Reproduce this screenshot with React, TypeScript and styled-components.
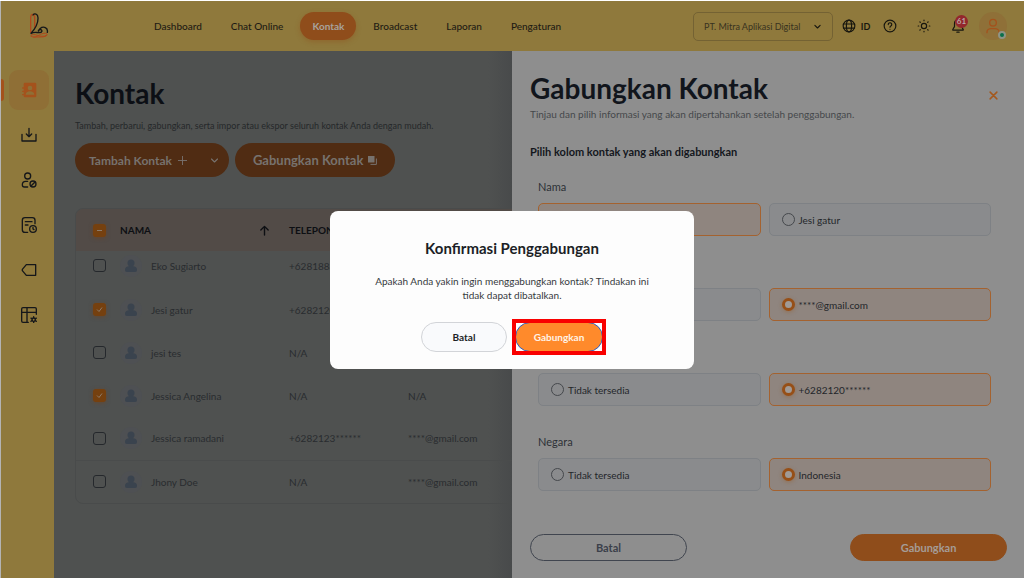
import React from 'react';
import styled, { createGlobalStyle } from 'styled-components';

const GlobalStyle = createGlobalStyle`
  *, *::before, *::after { box-sizing: border-box; }
  body {
    margin: 0;
    background: #fff;
    font-family: Lato, "Liberation Sans", sans-serif;
    font-size: 10px;
    color: #14181f;
  }
  h1, h2, p, fieldset, ul { margin: 0; padding: 0; border: 0; list-style: none; }
  button, input, select { font: inherit; color: inherit; margin: 0; }
  button { cursor: pointer; padding: 0; border: 0; background: none; }
  a { color: inherit; text-decoration: none; }
`;

const Page = styled.div`
  min-height: 100vh;
  display: flex;
  flex-direction: column;
  border-top: 1px solid #fff;
`;

const Header = styled.header`
  display: flex;
  align-items: center;
  height: 50px;
  padding: 0 17px 0 28px;
  border-left: 1px solid #b4b4b4;
  background: #8f793c;
`;

const Logo = styled.a`
  display: flex;
  width: 113px;
`;

const Nav = styled.nav`
  display: flex;
  gap: 5px;
  flex: 1;
`;

const NavLink = styled.a<{ $active?: boolean }>`
  display: flex;
  align-items: center;
  height: 28px;
  padding: 0 12px;
  border-radius: 14px;
  font-size: 10px;
  white-space: nowrap;
  color: ${p => (p.$active ? '#a8a29c' : '#1e1b14')};
  font-weight: ${p => (p.$active ? 700 : 500)};
  background: ${p => (p.$active ? '#8f4d1b' : 'transparent')};
  box-shadow: ${p => (p.$active ? '0 2px 5px rgba(143, 77, 27, 0.4)' : 'none')};
`;

const Tools = styled.div`
  display: flex;
  align-items: center;
  color: #17160f;
`;

const CompanyField = styled.div`
  display: grid;
  align-items: center;
  width: 140px;
  margin-right: 6px;
  > * { grid-area: 1 / 1; }
  > svg { justify-self: end; margin-right: 11px; pointer-events: none; }
`;

const CompanySelect = styled.select`
  appearance: none;
  width: 100%;
  height: 29px;
  padding: 0 24px 0 10px;
  border: 1px solid #746233;
  border-radius: 5px;
  background: transparent;
  color: #38321f;
  font-size: 9px;
`;

const ToolButton = styled.button`
  display: flex;
  align-items: center;
  justify-content: center;
  gap: 5px;
  min-width: 34px;
  height: 30px;
  font-size: 9px;
  font-weight: 700;
`;

const BellWrap = styled.span`
  position: relative;
  display: flex;
`;

const Badge = styled.span`
  position: absolute;
  top: -4px;
  left: 4px;
  min-width: 13px;
  height: 13px;
  border-radius: 7px;
  background: #93272c;
  color: #b9a5a5;
  font-size: 8px;
  line-height: 13px;
  text-align: center;
`;

const Profile = styled.button`
  position: relative;
  display: flex;
  align-items: center;
  justify-content: center;
  width: 28px;
  height: 28px;
  margin-left: 4px;
  border-radius: 50%;
  background: #8f7038;
  color: #a4521c;
`;

const Presence = styled.span`
  position: absolute;
  right: 1px;
  bottom: 1px;
  width: 8px;
  height: 8px;
  border-radius: 50%;
  border: 2px solid #8e9486;
  background: #08704a;
`;

const Body = styled.div`
  display: flex;
  flex: 1;
`;

const Sidebar = styled.nav`
  display: flex;
  flex-direction: column;
  gap: 5px;
  flex: 0 0 54px;
  padding: 19px 5px 0 0;
  border-left: 1px solid #b4b4b4;
  background: #8f793c;
`;

const SideLink = styled.a<{ $active?: boolean }>`
  display: flex;
  align-items: center;
  justify-content: space-between;
  height: 40px;
  color: ${p => (p.$active ? '#a4521c' : '#15171a')};
  &::before {
    content: '';
    width: 3px;
    height: 22px;
    border-radius: 0 3px 3px 0;
    background: ${p => (p.$active ? '#a4521c' : 'transparent')};
  }
`;

const SideIcon = styled.span<{ $active?: boolean }>`
  display: flex;
  align-items: center;
  justify-content: center;
  width: 40px;
  height: 40px;
  border-radius: 9px;
  background: ${p => (p.$active ? '#8f6f36' : 'transparent')};
`;

const Main = styled.main`
  flex: 1;
  min-width: 0;
  overflow: hidden;
  padding: 22px 0 0 21px;
  background: linear-gradient(to left, #484a4b, #4f5150 24px);
`;

const Title = styled.h1`
  font-size: 28px;
  line-height: 40px;
  font-weight: 700;
  color: #0c0f15;
`;

const Lead = styled.p`
  margin-top: 6px;
  font-size: 9px;
  line-height: 14px;
  white-space: nowrap;
  color: #25282a;
`;

const Actions = styled.div`
  display: flex;
  gap: 6px;
  margin: 10px 0 31px;
`;

const ActionButton = styled.button<{ $large?: boolean }>`
  display: flex;
  align-items: center;
  justify-content: center;
  gap: 5px;
  height: 34px;
  padding: ${p => (p.$large ? '0 18px' : '0 10px 0 14px')};
  border-radius: 17px;
  background: #502c13;
  color: #77726e;
  font-size: ${p => (p.$large ? 13 : 12)}px;
  font-weight: 700;
  white-space: nowrap;
  > svg:last-child { margin-left: ${p => (p.$large ? 0 : 17)}px; }
`;

const TableCard = styled.div`
  width: 600px;
  overflow: hidden;
  border: 1px solid #494b4b;
  border-radius: 8px;
`;

const Table = styled.table`
  width: 100%;
  table-layout: fixed;
  border-collapse: collapse;
  font-size: 10px;
  color: #292c2f;

  th, td { padding: 0; text-align: left; white-space: nowrap; }
  th { height: 42px; background: #524b47; color: #0d0f13; }
  td { height: 43px; }
  tbody tr:first-child td { height: 37px; padding-bottom: 8px; }
  tbody tr:last-child td { border-top: 1px solid #4a4c4c; }
  th:first-child, td:first-child { padding-left: 17px; }
`;

const Sortable = styled.span`
  display: flex;
  align-items: center;
  justify-content: space-between;
  padding-right: 19px;
`;

const Person = styled.span`
  display: flex;
  align-items: center;
  gap: 9px;
`;

const PersonAvatar = styled.span`
  display: flex;
  align-items: center;
  justify-content: center;
  width: 22px;
  height: 22px;
  border-radius: 50%;
  background: #4e5053;
`;

const CheckMark = styled.span`
  display: grid;
  width: 13px;
  height: 13px;
  > * { grid-area: 1 / 1; }
  > svg { pointer-events: none; }
`;

const CheckInput = styled.input<{ $filled?: boolean }>`
  appearance: none;
  width: 13px;
  height: 13px;
  border: ${p => (p.$filled ? '0' : '1px solid #25282c')};
  border-radius: 3px;
  background: ${p => (p.$filled ? '#75400f' : 'transparent')};
  box-shadow: ${p => (p.$filled ? '0 1px 4px rgba(120, 62, 20, 0.5)' : 'none')};
`;

const Drawer = styled.aside`
  display: flex;
  flex-direction: column;
  flex: 0 0 50%;
  padding: 18px 17px 17px 18px;
  background: #8e8e8e;
  color: #1c2026;
`;

const DrawerHead = styled.div`
  display: flex;
  align-items: center;
  justify-content: space-between;
  height: 52px;
  margin-bottom: 24px;
`;

const DrawerTitle = styled.h2`
  font-size: 28px;
  line-height: 38px;
  font-weight: 700;
  color: #11151c;
`;

const DrawerLead = styled.p`
  font-size: 10px;
  line-height: 14px;
  color: #45484b;
`;

const CloseButton = styled.button`
  display: flex;
  padding: 9px;
  color: #a4581d;
`;

const SectionTitle = styled.p`
  font-size: 11px;
  line-height: 14px;
  font-weight: 700;
  color: #14171d;
`;

const FieldList = styled.div`
  display: flex;
  flex-direction: column;
  gap: 29px;
  flex: 1;
  padding: 21px 16px 20px 8px;
`;

const Field = styled.fieldset`
  min-width: 0;
`;

const FieldName = styled.legend`
  padding: 0;
  margin-bottom: 9px;
  font-size: 11px;
  line-height: 14px;
  color: #2d3136;
`;

const Options = styled.div`
  display: grid;
  grid-template-columns: 1fr 1fr;
  gap: 8px;
`;

const Option = styled.label<{ $selected: boolean }>`
  display: flex;
  align-items: center;
  gap: 4px;
  height: 33px;
  padding: 0 12px;
  border: 1px solid ${p => (p.$selected ? '#a4622f' : '#7e8185')};
  border-radius: 5px;
  background: ${p => (p.$selected ? '#8f857f' : '#8a8b8d')};
  color: #23262a;
`;

const RadioInput = styled.input`
  appearance: none;
  width: 13px;
  height: 13px;
  border: 1px solid #45484c;
  border-radius: 50%;
  &:checked {
    border: 3px solid #964f17;
    background: #a09a96;
    box-shadow: 0 1px 4px rgba(150, 79, 23, 0.4);
  }
`;

const DrawerFoot = styled.div`
  display: flex;
  justify-content: space-between;
`;

const FootButton = styled.button<{ $primary?: boolean }>`
  width: 157px;
  height: 27px;
  border-radius: 14px;
  border: 1px solid ${p => (p.$primary ? '#8f4d1b' : '#40454f')};
  background: ${p => (p.$primary ? '#8f4d1b' : 'transparent')};
  color: ${p => (p.$primary ? '#a59c96' : '#3b404a')};
  font-size: 11px;
  font-weight: 700;
`;

const Backdrop = styled.div`
  position: fixed;
  inset: 1px 0 0 0;
  display: flex;
  align-items: center;
  justify-content: center;
`;

const Dialog = styled.div`
  display: flex;
  flex-direction: column;
  align-items: center;
  width: 364px;
  padding: 27px 40px 17px;
  border-radius: 8px;
  background: #fdfdfd;
  text-align: center;
`;

const DialogTitle = styled.h2`
  font-size: 15px;
  line-height: 20px;
  font-weight: 700;
  color: #1c1f26;
`;

const DialogText = styled.p`
  margin: 16px 0 20px;
  font-size: 10px;
  line-height: 14px;
  color: #363a40;
`;

const DialogActions = styled.div`
  display: flex;
  gap: 8px;
`;

const DialogButton = styled.button<{ $primary?: boolean }>`
  width: ${p => (p.$primary ? 88 : 86)}px;
  height: 30px;
  border-radius: 15px;
  border: 1px solid ${p => (p.$primary ? '#2d5fc4' : '#d2d4d8')};
  background: ${p => (p.$primary ? '#ff8a2b' : '#f9fafc')};
  color: ${p => (p.$primary ? '#fff3e6' : '#1c1f26')};
  font-size: 10px;
  font-weight: 700;
`;

const Highlight = styled.span`
  display: flex;
  outline: 4px solid #f90000;
  outline-offset: -1px;
`;

type IconProps = { size?: number; width?: number; children: React.ReactNode };

const Icon = ({ size = 16, width = 2, children }: IconProps) => (
  <svg width={size} height={size} viewBox="0 0 24 24" fill="none" stroke="currentColor"
    strokeWidth={width} strokeLinecap="round" strokeLinejoin="round" aria-hidden="true">
    {children}
  </svg>
);

const LogoMark = () => (
  <svg width="20" height="26" viewBox="0 0 60 78" fill="none" strokeWidth="4" strokeLinecap="round" aria-hidden="true">
    <path d="M5 58V14C5 0 17 2 17 14v30" stroke="#b0481b" />
    <path d="M5 68c4-5 12-4 20-1s20 5 28 0M7 70c8 5 16 1 24-4s22-8 23-2-10 8-20 8H14" stroke="#b0481b" strokeWidth="3" />
    <path d="M12 6C16 0 27 2 27 14c1 20-9 34-22 48 11-7 18-3 26-3 9 0 10-8 4-9s-8 2-6 4c4-11 14-14 20-10 6 3 7 9 6 14" stroke="#17181a" />
  </svg>
);

const sideItems: { label: string; active?: boolean; icon: React.ReactNode }[] = [
  {
    label: 'Kontak',
    active: true,
    icon: (
      <svg width="16" height="16" viewBox="0 0 24 24" aria-hidden="true">
        <path fill="currentColor" fillRule="evenodd" d="M6 1h15a2 2 0 0 1 2 2v18a2 2 0 0 1-2 2H6a2 2 0 0 1-2-2v-1H2.500a1 1 0 0 1 0-2H4v-3H2.500a1 1 0 0 1 0-2H4v-3H2.500a1 1 0 0 1 0-2H4V3a2 2 0 0 1 2-2zm7.500 4.500a3.500 3.500 0 1 0 0 7 3.500 3.500 0 0 0 0-7zM7 19h13c0-3-3-5-6.500-5S7 16 7 19z" />
      </svg>
    ),
  },
  { label: 'Impor', icon: <Icon><path d="M1.500 11v10h21V11M12 2v12M8 10.500l4 4 4-4" /></Icon> },
  {
    label: 'Kontak diblokir',
    icon: <Icon><circle cx="10" cy="6" r="4.500" /><path d="M10 14H7a5 5 0 0 0-5 5c0 2 1 3.500 3 3.500h5" /><circle cx="18" cy="18" r="4.500" /><path d="M15 21l6-6" /></Icon>,
  },
  {
    label: 'Riwayat',
    icon: <Icon><path d="M21 10V5a4 4 0 0 0-4-4H6a4 4 0 0 0-4 4v14a4 4 0 0 0 4 4h4M6.500 7h10M6.500 12h4" /><circle cx="18" cy="18" r="5" /><path d="M18 15.500V18l1.500 1" /></Icon>,
  },
  { label: 'Label', icon: <Icon><path d="M8 4h14v16H8l-6-7v-2z" /></Icon> },
  {
    label: 'Kolom',
    icon: <Icon><path d="M23 11V3a2 2 0 0 0-2-2H3a2 2 0 0 0-2 2v18a2 2 0 0 0 2 2h8M1 8h22M9 1v22" /><circle cx="19" cy="19" r="2.500" /><path d="M19 14.500v1.500M19 22v1.500M15 16.700l1.500 1M21.500 20.400l1.500 1M15 21.400l1.500-1M21.500 17.700l1.500-1" /></Icon>,
  },
];

const navItems = ['Dashboard', 'Chat Online', 'Kontak', 'Broadcast', 'Laporan', 'Pengaturan'];

const contacts = [
  { name: 'Eko Sugiarto', phone: '+6281883******', email: 'N/A', checked: false },
  { name: 'Jesi gatur', phone: '+6282120******', email: 'N/A', checked: true },
  { name: 'jesi tes', phone: 'N/A', email: 'N/A', checked: false },
  { name: 'Jessica Angelina', phone: 'N/A', email: 'N/A', checked: true },
  { name: 'Jessica ramadani', phone: '+6282123******', email: '****@gmail.com', checked: false },
  { name: 'Jhony Doe', phone: 'N/A', email: '****@gmail.com', checked: false },
];

const fields = [
  { name: 'Nama', options: ['Jessica Angelina', 'Jesi gatur'], selected: 0 },
  { name: 'Email', options: ['Tidak tersedia', '****@gmail.com'], selected: 1 },
  { name: 'Telepon', options: ['Tidak tersedia', '+6282120******'], selected: 1 },
  { name: 'Negara', options: ['Tidak tersedia', 'Indonesia'], selected: 1 },
];

const Tick = ({ label, checked, mixed }: { label: string; checked: boolean; mixed?: boolean }) => (
  <CheckMark>
    <CheckInput type="checkbox" aria-label={label} defaultChecked={checked} $filled={checked || mixed} />
    {(checked || mixed) && (
      <svg width="13" height="13" viewBox="0 0 13 13" fill="none" stroke="#8d7a68" aria-hidden="true">
        <path d={mixed ? 'M4 6.500h5' : 'M4 6.500l2 2 3-4'} />
      </svg>
    )}
  </CheckMark>
);

export default function App() {
  return (
    <>
      <GlobalStyle />
      <Page>
        <Header>
          <Logo href="#" aria-label="Beranda"><LogoMark /></Logo>
          <Nav>
            {navItems.map(item => (
              <NavLink key={item} href="#" $active={item === 'Kontak'}>{item}</NavLink>
            ))}
          </Nav>
          <Tools>
            <CompanyField>
              <CompanySelect aria-label="Perusahaan">
                <option>PT. Mitra Aplikasi Digital</option>
              </CompanySelect>
              <Icon size={9} width={3}><path d="M5 9l7 7 7-7" /></Icon>
            </CompanyField>
            <ToolButton>
              <Icon size={14}><circle cx="12" cy="12" r="10" /><ellipse cx="12" cy="12" rx="4.500" ry="10" /><path d="M2.500 8.500h19M2.500 15.500h19" /></Icon>
              ID
            </ToolButton>
            <ToolButton aria-label="Bantuan">
              <Icon size={14}><circle cx="12" cy="12" r="10" /><path d="M9 9.500a3 3 0 1 1 4.500 2.600c-1 .6-1.500 1-1.500 2M12 17.500v.1" /></Icon>
            </ToolButton>
            <ToolButton aria-label="Tema">
              <Icon size={14}><circle cx="12" cy="12" r="4.500" /><path d="M12 2v1M12 21v1M2 12h1M21 12h1M4.900 4.900l.7.7M18.400 18.400l.7.7M4.900 19.100l.7-.7M18.400 5.600l.7-.7" /></Icon>
            </ToolButton>
            <ToolButton aria-label="Notifikasi">
              <BellWrap>
                <Icon size={14}><path d="M12 2a6 6 0 0 0-6 6v5l-3 5v1h18v-1l-3-5V8a6 6 0 0 0-6-6zM10 22.500h4" /></Icon>
                <Badge>61</Badge>
              </BellWrap>
            </ToolButton>
            <Profile aria-label="Profil">
              <Icon size={16}><circle cx="12" cy="7" r="5" /><path d="M3 22v-1c0-3 3-5 6-5h6c3 0 6 2 6 5v1" /></Icon>
              <Presence />
            </Profile>
          </Tools>
        </Header>
        <Body>
          <Sidebar>
            {sideItems.map(item => (
              <SideLink key={item.label} href="#" aria-label={item.label} $active={item.active}>
                <SideIcon $active={item.active}>{item.icon}</SideIcon>
              </SideLink>
            ))}
          </Sidebar>
          <Main>
            <Title>Kontak</Title>
            <Lead>Tambah, perbarui, gabungkan, serta impor atau ekspor seluruh kontak Anda dengan mudah.</Lead>
            <Actions>
              <ActionButton>
                Tambah Kontak
                <Icon size={11} width={2}><path d="M12 3v18M3 12h18" /></Icon>
                <Icon size={9} width={3}><path d="M4 8l8 8 8-8" /></Icon>
              </ActionButton>
              <ActionButton $large>
                Gabungkan Kontak
                <svg width="9" height="9" viewBox="0 0 9 9" aria-hidden="true">
                  <path d="M0 0h6.500v6.500H0z" fill="currentColor" />
                  <path d="M8.400 2.500v5.900H2.500" fill="none" stroke="currentColor" />
                </svg>
              </ActionButton>
            </Actions>
            <TableCard>
              <Table>
                <colgroup>
                  <col width="44" />
                  <col width="169" />
                  <col width="119" />
                  <col />
                </colgroup>
                <thead>
                  <tr>
                    <th><Tick label="Pilih semua" checked={false} mixed /></th>
                    <th>
                      <Sortable>
                        NAMA
                        <Icon size={11} width={3}><path d="M12 22V3M4 11l8-8 8 8" /></Icon>
                      </Sortable>
                    </th>
                    <th>TELEPON</th>
                    <th>EMAIL</th>
                  </tr>
                </thead>
                <tbody>
                  {contacts.map(c => (
                    <tr key={c.name}>
                      <td><Tick label={c.name} checked={c.checked} /></td>
                      <td>
                        <Person>
                          <PersonAvatar>
                            <svg width="12" height="14" viewBox="0 0 12 14" fill="#3a434e" aria-hidden="true">
                              <circle cx="6" cy="4" r="3.500" />
                              <path d="M0 11c0-3 2-4 6-4s6 1 6 4c0 1-.5 2-2 2H2c-1.500 0-2-1-2-2z" />
                            </svg>
                          </PersonAvatar>
                          {c.name}
                        </Person>
                      </td>
                      <td>{c.phone}</td>
                      <td>{c.email}</td>
                    </tr>
                  ))}
                </tbody>
              </Table>
            </TableCard>
          </Main>
          <Drawer>
            <DrawerHead>
              <div>
                <DrawerTitle>Gabungkan Kontak</DrawerTitle>
                <DrawerLead>Tinjau dan pilih informasi yang akan dipertahankan setelah penggabungan.</DrawerLead>
              </div>
              <CloseButton aria-label="Tutup">
                <Icon size={9} width={4}><path d="M3 3l18 18M21 3L3 21" /></Icon>
              </CloseButton>
            </DrawerHead>
            <SectionTitle>Pilih kolom kontak yang akan digabungkan</SectionTitle>
            <FieldList>
              {fields.map(f => (
                <Field key={f.name}>
                  <FieldName>{f.name}</FieldName>
                  <Options>
                    {f.options.map((o, i) => (
                      <Option key={o} $selected={i === f.selected}>
                        <RadioInput type="radio" name={f.name} defaultChecked={i === f.selected} />
                        {o}
                      </Option>
                    ))}
                  </Options>
                </Field>
              ))}
            </FieldList>
            <DrawerFoot>
              <FootButton>Batal</FootButton>
              <FootButton $primary>Gabungkan</FootButton>
            </DrawerFoot>
          </Drawer>
        </Body>
      </Page>
      <Backdrop>
        <Dialog role="dialog" aria-modal="true" aria-labelledby="confirm-title">
          <DialogTitle id="confirm-title">Konfirmasi Penggabungan</DialogTitle>
          <DialogText>Apakah Anda yakin ingin menggabungkan kontak? Tindakan ini tidak dapat dibatalkan.</DialogText>
          <DialogActions>
            <DialogButton>Batal</DialogButton>
            <Highlight><DialogButton $primary>Gabungkan</DialogButton></Highlight>
          </DialogActions>
        </Dialog>
      </Backdrop>
    </>
  );
}
